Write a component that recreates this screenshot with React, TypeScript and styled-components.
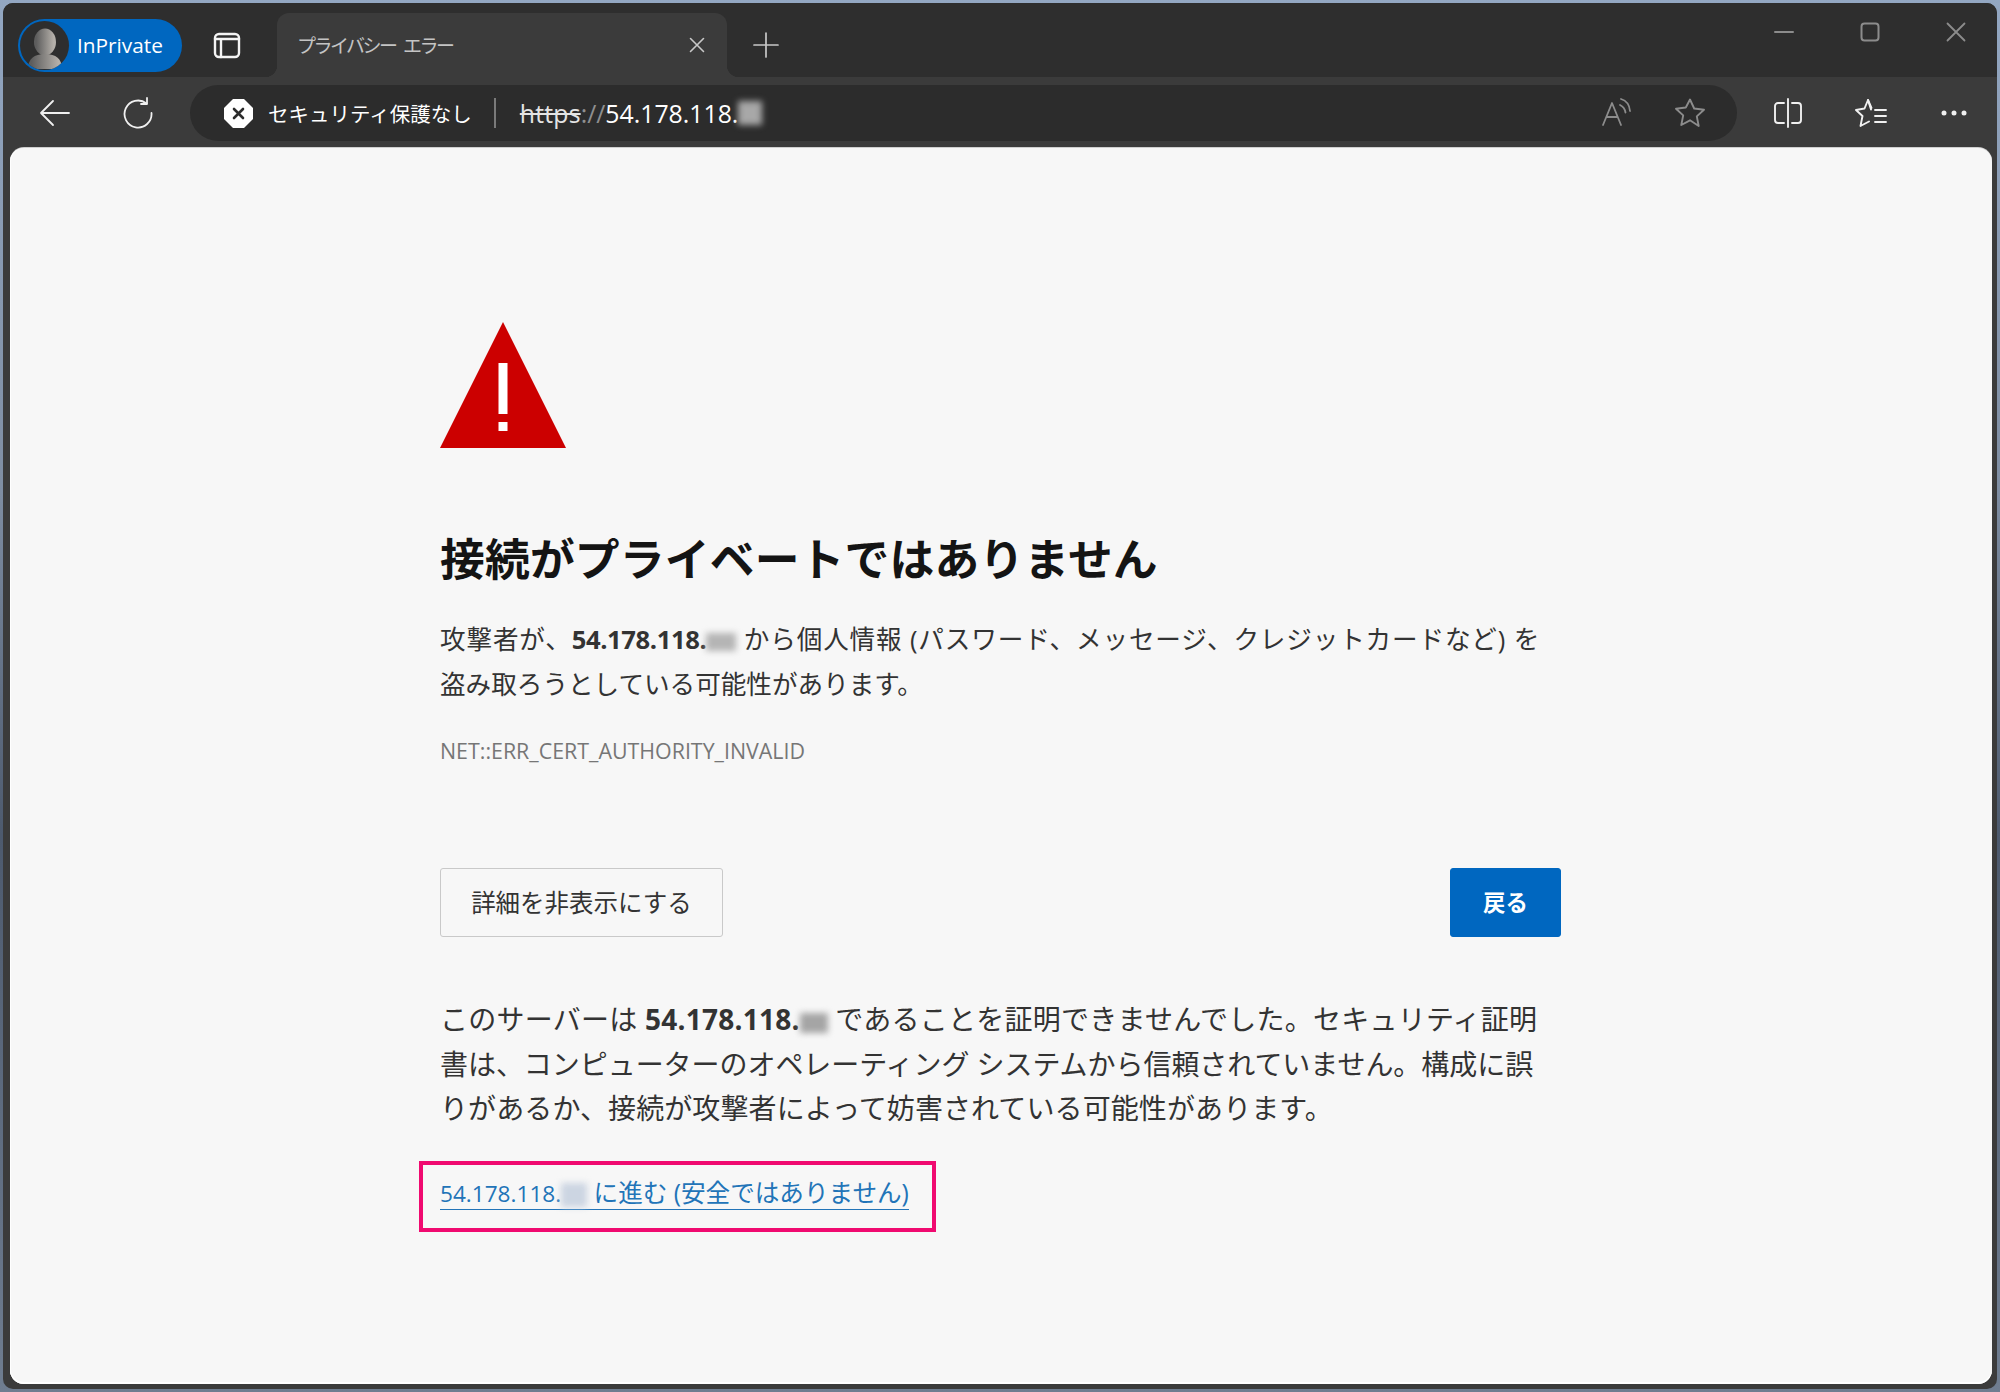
import { createGlobalStyle, styled } from 'styled-components';

const GlobalStyle = createGlobalStyle`
  html, body {
    margin: 0;
    height: 1392px;
    overflow: hidden;
    background: linear-gradient(180deg, #93a7c2 0%, #7f8ea3 35%, #4d5a6e 60%, #6f7d90 100%);
  }
  * {
    box-sizing: border-box;
  }
`;

const UI_FONT = `"Open Sans", "Noto Sans CJK JP", sans-serif`;

const Window = styled.div`
  margin: 3px 3px 0;
  height: 1386px;
  border-radius: 10px;
  overflow: hidden;
  background: #3b3b3b;
  display: flex;
  flex-direction: column;
  font-family: ${UI_FONT};
`;

const TabStrip = styled.div`
  height: 74px;
  flex: none;
  padding: 10px 21px 0 15px;
  background: #2e2e2e;
  display: flex;
  align-items: center;
`;

const ProfilePill = styled.div`
  width: 164px;
  height: 53px;
  border-radius: 27px;
  background: #0067c0;
  display: flex;
  align-items: center;
  gap: 8px;
  padding-left: 2px;
  color: #fff;
  font-size: 20.8px;
`;

const Avatar = styled.div`
  width: 49px;
  height: 49px;
  border-radius: 50%;
  flex: none;
  background: #2e2e2e;
  overflow: hidden;
`;

const IconSlot = styled.div<{ $w?: number }>`
  width: ${(p) => p.$w ?? 46}px;
  height: 46px;
  flex: none;
  display: flex;
  align-items: center;
  justify-content: center;
`;

const TabsButton = styled(IconSlot)`
  margin: 0 27px 0 22px;
`;

const Tab = styled.div`
  position: relative;
  width: 450px;
  height: 64px;
  align-self: flex-end;
  background: #3b3b3b;
  border-radius: 12px 12px 0 0;
  padding: 0 22px 0 20px;
  display: flex;
  align-items: center;
  justify-content: space-between;
  color: #c4c4c4;
  font-size: 19px;

  &::before,
  &::after {
    content: '';
    position: absolute;
    bottom: 0;
    width: 12px;
    height: 12px;
  }

  &::before {
    left: -12px;
    background: radial-gradient(circle at 0 0, transparent 12px, #3b3b3b 12.5px);
  }

  &::after {
    right: -12px;
    background: radial-gradient(circle at 100% 0, transparent 12px, #3b3b3b 12.5px);
  }
`;

const TabTitle = styled.span`
  letter-spacing: -2.5px;
  word-spacing: 5px;
`;

const NewTab = styled(IconSlot)`
  margin-left: 16px;
`;

const WindowControls = styled.div`
  margin-left: auto;
  align-self: flex-start;
  margin-top: 9px;
  display: flex;
  gap: 46px;
`;

const ControlSlot = styled.div`
  width: 40px;
  height: 20px;
  display: flex;
  align-items: center;
  justify-content: center;
`;

const Toolbar = styled.div`
  height: 71px;
  flex: none;
  padding: 0 20px 0 29px;
  display: flex;
  align-items: center;
  gap: 37px;
  background: #3b3b3b;
`;

const AddressBar = styled.div`
  flex: 1;
  height: 56px;
  margin: 1px -9px 0 -8px;
  border-radius: 28px;
  background: #2c2c2c;
  display: flex;
  align-items: center;
  padding: 0 31px 0 34px;
  color: #fff;
`;

const SecurityLabel = styled.span`
  margin-left: 15px;
  font-size: 20.5px;
  white-space: nowrap;
`;

const Divider = styled.div`
  width: 2px;
  height: 30px;
  margin: 0 24px 0 22px;
  background: #7a7a7a;
`;

const Url = styled.div`
  font-size: 24.8px;
  display: flex;
  align-items: center;
  white-space: nowrap;
`;

const Scheme = styled.span`
  text-decoration: line-through;
  color: #e4e4e4;
  letter-spacing: 0.2px;
`;

const SchemeSep = styled.span`
  color: #8f8f8f;
`;

const Smudge = styled.span<{ $w: number; $h: number; $c: string }>`
  display: inline-block;
  width: ${(p) => p.$w}px;
  height: ${(p) => p.$h}px;
  background: ${(p) => p.$c};
  filter: blur(3px);
  vertical-align: middle;
`;

const AddressActions = styled.div`
  margin-left: auto;
  display: flex;
  gap: 43px;
`;

const Content = styled.div`
  flex: 1;
  margin: 0 5px 5px 7px;
  border-radius: 14px;
  background: #f7f7f7;
  box-shadow: inset 0 -2px 0 #fff, inset 1px 0 0 #fff, 0 -1px 0 #cfcfcf;
  color: #333;
`;

const Main = styled.main`
  width: 1121px;
  margin-left: 430px;
  padding-top: 174px;
`;

const WarningIcon = styled.svg`
  display: block;
  width: 126px;
  height: 126px;
`;

const Heading = styled.h1`
  margin: 81px 0 28px;
  font-size: 44.8px;
  line-height: 60px;
  font-weight: 700;
  letter-spacing: 0.15px;
  color: #141414;
`;

const Lead = styled.p`
  margin: 0;
  font-size: 25.6px;
  line-height: 45px;
`;

// each text line is kept apart because the letter fit differs from line to line
const Line = styled.span<{ $spacing?: number }>`
  display: block;
  white-space: nowrap;
  letter-spacing: ${(p) => p.$spacing ?? 0}px;
`;

const Address = styled.strong`
  letter-spacing: -0.4px;
`;

const ErrorCode = styled.div`
  margin-top: 29px;
  font-size: 21.4px;
  line-height: 30px;
  color: #767676;
`;

const ButtonRow = styled.div`
  margin-top: 102px;
  display: flex;
  justify-content: space-between;
`;

const Button = styled.button<{ $primary?: boolean }>`
  height: 69px;
  width: ${(p) => (p.$primary ? 111 : 283)}px;
  border-radius: 3px;
  border: 1px solid ${(p) => (p.$primary ? '#0067c0' : '#c9c9c9')};
  background: ${(p) => (p.$primary ? '#0067c0' : 'transparent')};
  color: ${(p) => (p.$primary ? '#fff' : '#333')};
  font-family: ${UI_FONT};
  font-size: ${(p) => (p.$primary ? 22.4 : 24.5)}px;
  font-weight: ${(p) => (p.$primary ? 700 : 400)};
  padding: 0 0 2px;
`;

const Explanation = styled.p`
  margin: 60px 0 0;
  font-size: 28px;
  line-height: 44.6px;
`;

const Highlight = styled.div`
  width: 517px;
  height: 71px;
  margin: 30px 0 0 -21px;
  padding: 0 0 5px 17px;
  border: 4px solid #f00a70;
  display: flex;
  align-items: center;
`;

const ProceedLink = styled.a`
  font-size: 24.6px;
  line-height: 30px;
  color: #2274b8;
  border-bottom: 1.5px solid #2274b8;
  white-space: nowrap;
`;

const LinkHost = styled.span`
  font-size: 22.6px;
`;

const Icon = styled.svg`
  display: block;
  fill: none;
  stroke-linecap: round;
  stroke-linejoin: round;
`;

const Dots = styled.svg`
  display: block;
  fill: #f0f0f0;
`;

const PrivateAvatar = () => (
  <svg width="49" height="49" viewBox="0 0 49 49">
    <defs>
      <linearGradient id="avatarShade" x1="0" x2="1" y1="0" y2="0">
        <stop offset="0.1" stopColor="#5d5d5d" />
        <stop offset="0.9" stopColor="#b5b0aa" />
      </linearGradient>
    </defs>
    <ellipse cx="25" cy="21" rx="11" ry="13.5" fill="url(#avatarShade)" />
    <path d="M8 48c0-10 6-15 17-15s17 5 17 15z" fill="url(#avatarShade)" />
  </svg>
);

export default function App() {
  return (
    <>
      <GlobalStyle />
      <Window>
        <TabStrip>
          <ProfilePill>
            <Avatar>
              <PrivateAvatar />
            </Avatar>
            InPrivate
          </ProfilePill>
          <TabsButton>
            <Icon width="28" height="28" viewBox="0 0 28 28" stroke="#f4f4f4" strokeWidth="2.4">
              <rect x="2" y="3" width="24" height="23" rx="4" />
              <path d="M2 8h24M8 8v18" />
            </Icon>
          </TabsButton>
          <Tab>
            <TabTitle>プライバシー エラー</TabTitle>
            <Icon width="16" height="16" viewBox="0 0 16 16" stroke="#c8c8c8" strokeWidth="1.6">
              <path d="M1.5 1.5l13 13M14.5 1.5l-13 13" />
            </Icon>
          </Tab>
          <NewTab>
            <Icon width="26" height="26" viewBox="0 0 26 26" stroke="#c8c8c8" strokeWidth="1.7">
              <path d="M13 1v24M1 13h24" />
            </Icon>
          </NewTab>
          <WindowControls>
            <ControlSlot>
              <Icon width="20" height="2" viewBox="0 0 20 2" stroke="#8c8c8c" strokeWidth="2">
                <path d="M1 1h18" />
              </Icon>
            </ControlSlot>
            <ControlSlot>
              <Icon width="20" height="20" viewBox="0 0 20 20" stroke="#8c8c8c" strokeWidth="2">
                <rect x="1.5" y="1.5" width="17" height="17" rx="3" />
              </Icon>
            </ControlSlot>
            <ControlSlot>
              <Icon width="20" height="20" viewBox="0 0 20 20" stroke="#8c8c8c" strokeWidth="1.8">
                <path d="M1.5 1.5l17 17M18.5 1.5l-17 17" />
              </Icon>
            </ControlSlot>
          </WindowControls>
        </TabStrip>

        <Toolbar>
          <IconSlot>
            <Icon width="32" height="28" viewBox="0 0 32 28" stroke="#f0f0f0" strokeWidth="1.8">
              <path d="M2 14h28M14 2L2 14l12 12" />
            </Icon>
          </IconSlot>
          <IconSlot>
            <Icon width="32" height="32" viewBox="0 0 32 32" stroke="#f0f0f0" strokeWidth="1.8">
              <path d="M24.5 6.5A13.5 13.5 0 1 0 29.5 16" />
              <path d="M25 1v6h-6" />
            </Icon>
          </IconSlot>
          <AddressBar>
            <svg width="29" height="29" viewBox="0 0 29 29">
              <path d="M9 0h11l9 9v11l-9 9H9l-9-9V9z" fill="#fff" />
              <path d="M10 10l9 9M19 10l-9 9" stroke="#2c2c2c" strokeWidth="2.6" strokeLinecap="round" />
            </svg>
            <SecurityLabel>セキュリティ保護なし</SecurityLabel>
            <Divider />
            <Url>
              <Scheme>https</Scheme>
              <SchemeSep>://</SchemeSep>
              54.178.118.
              <Smudge $w={24} $h={24} $c="#a8a8a8" />
            </Url>
            <AddressActions>
              <Icon width="30" height="30" viewBox="0 0 30 30" stroke="#8c8c8c" strokeWidth="1.8">
                <path d="M2 28L11 6l9 22M5.5 20h11" />
                <path d="M19 8c3 1.500 5 4 5.500 7.500M20 2c5 1.500 8.500 6 9 12" />
              </Icon>
              <Icon width="32" height="32" viewBox="0 0 32 32" stroke="#8c8c8c" strokeWidth="1.9">
                <path d="M16 2.500l4.200 9 9.800 1.200-7.200 6.700 1.900 9.600L16 23.300 7.300 28l1.900-9.600L2 11.700l9.800-1.200z" />
              </Icon>
            </AddressActions>
          </AddressBar>
          <IconSlot>
            <Icon width="30" height="30" viewBox="0 0 30 30" stroke="#f0f0f0" strokeWidth="1.9">
              <path d="M15 1v28M11 5H5a3 3 0 0 0-3 3v14a3 3 0 0 0 3 3h6M19 5h6a3 3 0 0 1 3 3v14a3 3 0 0 1-3 3h-6" />
            </Icon>
          </IconSlot>
          <IconSlot>
            <Icon width="32" height="30" viewBox="0 0 32 30" stroke="#f0f0f0" strokeWidth="1.9">
              <path d="M16 11.500L13 2 9.500 10.500 1 12l6.500 6L5.500 28l8.500-4.500" />
              <path d="M13 2l3.500 8M20 12h11M20 18h11M20 24h11" />
            </Icon>
          </IconSlot>
          <IconSlot>
            <Dots width="26" height="6" viewBox="0 0 26 6">
              <circle cx="3" cy="3" r="2.500" />
              <circle cx="13" cy="3" r="2.500" />
              <circle cx="23" cy="3" r="2.500" />
            </Dots>
          </IconSlot>
        </Toolbar>

        <Content>
          <Main>
            <WarningIcon viewBox="0 0 126 126">
              <path d="M63 0l63 126H0z" fill="#cc0000" />
              <path d="M58.500 41h9v51h-9zM58.500 100h9v9h-9z" fill="#fff" />
            </WarningIcon>
            <Heading>接続がプライベートではありません</Heading>
            <Lead>
              <Line $spacing={0.85}>
                攻撃者が、<Address>54.178.118.</Address>
                <Smudge $w={30} $h={18} $c="#b5b5b5" /> から個人情報 (パスワード、メッセージ、クレジットカードなど) を
              </Line>
              <Line>盗み取ろうとしている可能性があります。</Line>
            </Lead>
            <ErrorCode>NET::ERR_CERT_AUTHORITY_INVALID</ErrorCode>
            <ButtonRow>
              <Button>詳細を非表示にする</Button>
              <Button $primary>戻る</Button>
            </ButtonRow>
            <Explanation>
              <Line $spacing={0.25}>
                このサーバーは <strong>54.178.118.</strong>
                <Smudge $w={28} $h={20} $c="#a5a5a5" /> であることを証明できませんでした。セキュリティ証明
              </Line>
              <Line $spacing={-0.05}>書は、コンピューターのオペレーティング システムから信頼されていません。構成に誤</Line>
              <Line $spacing={0.1}>りがあるか、接続が攻撃者によって妨害されている可能性があります。</Line>
            </Explanation>
            <Highlight>
              <ProceedLink>
                <LinkHost>54.178.118.</LinkHost>
                <Smudge $w={26} $h={24} $c="#ccd5e2" /> に進む (安全ではありません)
              </ProceedLink>
            </Highlight>
          </Main>
        </Content>
      </Window>
    </>
  );
}
